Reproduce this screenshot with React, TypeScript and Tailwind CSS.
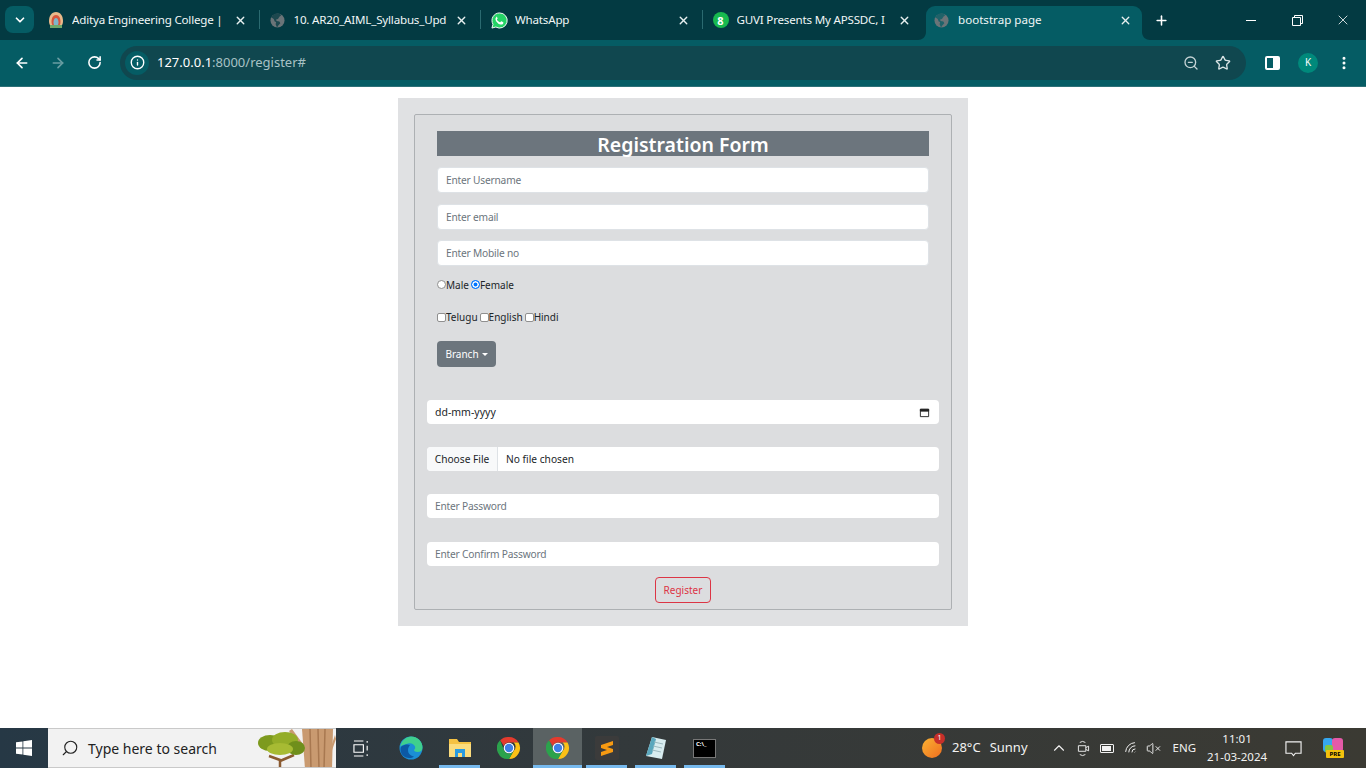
import {
  ArrowLeft,
  ArrowRight,
  ChevronDown,
  ChevronUp,
  Info,
  MoreVertical,
  Plus,
  RotateCw,
  Search,
  Star,
  VolumeX,
  Wifi,
  X,
  ZoomOut,
} from "lucide-react";
import type { ReactNode } from "react";

const ui = "font-['Noto_Sans','Open_Sans',sans-serif]";

const AdityaIcon = () => (
  <svg viewBox="0 0 16 16" className="h-[18px] w-[16px]">
    <path d="M8 0C3.500 0 1 4 1 9c0 4 2 7 7 7s7-3 7-7c0-5-2.500-9-7-9z" fill="#e9b98a" />
    <path d="M8 3C5 3 3.500 6 3.500 10c0 3 1.500 4.500 4.500 4.500s4.500-1.500 4.500-4.500C12.500 6 11 3 8 3z" fill="#d6553c" />
    <path d="M8 6c-1.500 0-2.500 2-2.500 4.500S6.500 14 8 14s2.500-1 2.500-3.500S9.500 6 8 6z" fill="#7fb6c9" />
    <path d="M2 13h12v3H2z" fill="#6fa86a" />
  </svg>
);

const GlobeIcon = ({ land }: { land: string }) => (
  <svg viewBox="0 0 16 16" className="h-[15px] w-[15px]">
    <circle cx="8" cy="8" r="7.500" fill="#6b7478" />
    <path
      d="M8 .5C5 .5 2.500 2 1.200 4.500L4 6.500l1 2.500 1.500.5L6 12l1.500 3.400L9 13l2-2-1-2-3-.5-.5-1.500 2-.5L10 4l2-1.500C11 1.300 9.500.5 8 .5z"
      fill={land}
      opacity="0.75"
    />
  </svg>
);

const WhatsAppIcon = () => (
  <svg viewBox="0 0 18 18" className="h-[17px] w-[17px]">
    <path d="M9 1a8 8 0 0 0-6.900 12L1 17l4.100-1.100A8 8 0 1 0 9 1z" fill="#25d366" stroke="#fff" strokeWidth="1" />
    <path
      d="M6.500 5c-.3 0-.7.1-1 .5-.4.500-.9 1.200-.7 2.400.2 1.300 1.200 2.800 2.500 3.900 1.400 1.100 2.700 1.600 3.700 1.500 1-.1 1.900-.8 2-1.500.1-.5.1-.8 0-.9l-2-1c-.2-.1-.4 0-.5.1l-.7.9c-.1.1-.3.1-.5 0-.6-.3-1.300-.7-1.900-1.300-.5-.5-.9-1.100-1.100-1.500-.1-.2 0-.3.1-.4l.5-.6c.1-.2.1-.3 0-.5l-.8-2c-.1-.4-.3-.6-.6-.6z"
      fill="#fff"
    />
  </svg>
);

const GuviIcon = () => (
  <div className="flex h-4 w-4 items-center justify-center rounded-full bg-[#18b94f] text-[11px] font-bold leading-none text-white">
    8
  </div>
);

const Tab = ({ icon, title, divider }: { icon: ReactNode; title: string; divider?: boolean }) => (
  <div className="relative flex h-[34px] w-[221.500px] shrink-0 items-center pb-[6px] pl-[10px] pr-[13px]">
    <div className="flex w-6 shrink-0 items-center">{icon}</div>
    <span className="min-w-0 flex-1 overflow-hidden whitespace-nowrap text-[11.600px] tracking-[-0.2px] text-[#f0f6f6]">
      {title}
    </span>
    <X size={13} strokeWidth={2.5} className="ml-2 shrink-0 text-[#e8f0f0]" />
    {divider && <div className="absolute right-0 top-[4px] h-[19px] w-px bg-[#2b6a70]" />}
  </div>
);

const ActiveTab = ({ icon, title }: { icon: ReactNode; title: string }) => (
  <div className="relative ml-[2px] flex h-[34px] w-[216px] shrink-0 items-center rounded-t-[9px] bg-[#055c64] pb-[6px] pl-[8px] pr-[10px]">
    <svg viewBox="0 0 8 8" className="absolute bottom-0 left-[-8px] h-2 w-2" fill="#055c64">
      <path d="M8 0v8H0c4 0 8-3 8-8z" />
    </svg>
    <svg viewBox="0 0 8 8" className="absolute bottom-0 right-[-8px] h-2 w-2" fill="#055c64">
      <path d="M0 0v8h8C4 8 0 5 0 0z" />
    </svg>
    <div className="flex w-6 shrink-0 items-center">{icon}</div>
    <span className="min-w-0 flex-1 overflow-hidden whitespace-nowrap text-[11.600px] text-[#f0f6f6]">{title}</span>
    <X size={13} strokeWidth={2.5} className="ml-2 shrink-0 text-[#e8f0f0]" />
  </div>
);

const ChromeStrip = () => (
  <div className="flex h-10 items-end bg-[#033a42] pl-[5px]">
    <div className="mb-[7px] mr-[4px] flex h-[27px] w-[29px] items-center justify-center rounded-lg bg-[#055c64]">
      <ChevronDown size={14} strokeWidth={3} className="text-white" />
    </div>
    <Tab icon={<AdityaIcon />} title="Aditya Engineering College |" divider />
    <Tab icon={<GlobeIcon land="#033a42" />} title="10. AR20_AIML_Syllabus_Upd" divider />
    <Tab icon={<WhatsAppIcon />} title="WhatsApp" divider />
    <Tab icon={<GuviIcon />} title="GUVI Presents My APSSDC, I" />
    <ActiveTab icon={<GlobeIcon land="#055c64" />} title="bootstrap page" />
    <div className="mb-[6px] ml-[11px] flex h-7 w-[16px] items-center justify-center">
      <Plus size={15} strokeWidth={2.5} className="text-white" />
    </div>
    <div className="ml-auto flex h-10 items-center">
      <div className="flex w-[46px] justify-center">
        <div className="h-px w-[10px] bg-white" />
      </div>
      <div className="flex w-[46px] justify-center">
        <svg viewBox="0 0 11 11" className="h-[11px] w-[11px]" fill="none" stroke="#fff">
          <path d="M.5 2.500h8v8h-8zM2.500 2.500v-2h8v8h-2" />
        </svg>
      </div>
      <div className="flex w-[46px] justify-center">
        <X size={16} strokeWidth={1.2} className="text-white" />
      </div>
    </div>
  </div>
);

const ChromeToolbar = () => (
  <div className="flex h-[47px] items-center border-b border-[#2d7077] bg-[#055c64] pb-[1px]">
    <ArrowLeft size={16} strokeWidth={2.5} className="ml-[14px] text-white" />
    <ArrowRight size={16} strokeWidth={2.5} className="ml-[20px] text-[#6a9da2]" />
    <RotateCw size={15} strokeWidth={2.5} className="ml-[21px] text-white" />
    <div className="ml-[18px] flex h-[34px] w-[1126px] items-center rounded-full bg-[#10474f]">
      <div className="ml-[5px] flex h-6 w-6 items-center justify-center rounded-full bg-[#055c64]">
        <Info size={15} strokeWidth={2.2} className="text-white" />
      </div>
      <span className="ml-[8px] text-[13px] text-white">
        127.0.0.1<span className="text-[#a8c2c5]">:8000/register#</span>
      </span>
      <ZoomOut size={16} strokeWidth={2} className="ml-auto text-[#c4d3d5]" />
      <Star size={16} strokeWidth={2} className="ml-[16px] mr-[15px] text-[#d9e4e5]" />
    </div>
    <div className="ml-[19px] flex h-[14px] w-[15px] justify-end rounded-[2px] border-2 border-white">
      <div className="w-[5px] bg-white" />
    </div>
    <div className="ml-[18px] flex h-5 w-5 items-center justify-center rounded-full bg-[#00897b] text-[10px] text-white">
      K
    </div>
    <MoreVertical size={16} strokeWidth={2.5} className="ml-[18px] text-white" />
  </div>
);

const field =
  "block h-[26px] w-full rounded-[4px] border border-[#dee2e6] bg-white px-2 text-[10.200px] tracking-[-0.2px] text-[#212529] outline-none placeholder:text-[#6c757d]";
const lowerField =
  "block h-[24px] w-full rounded-[4px] bg-white px-2 text-[10.200px] tracking-[-0.2px] text-[#212529] outline-none placeholder:text-[#6c757d]";
const radio =
  "m-0 -mt-[1px] h-[9px] w-[9px] appearance-none rounded-full border border-[#8f8f8f] bg-white checked:border-[#0075ff] checked:bg-[#0075ff] checked:shadow-[inset_0_0_0_1.500px_white]";
const check = "m-0 h-[9px] w-[9px] appearance-none rounded-[2px] border border-[#8f8f8f] bg-white";

const RegisterForm = () => (
  <div className="ml-[398px] mt-[11px] h-[528px] w-[570px] bg-[#e0e1e3] p-4">
    <div className="h-[496px] rounded-[2px] border border-[#adb0b3] bg-[#dcdddf] px-3 pt-4">
      <div className="px-[10px]">
        <h3 className="h-[25px] bg-[#6c757d] text-center text-[19.500px] font-semibold leading-[27px] text-white">
          Registration Form
        </h3>
        <input className={`${field} mt-[11px]`} placeholder="Enter Username" />
        <input className={`${field} mt-[11px]`} placeholder="Enter email" />
        <input className={`${field} mt-[10px]`} placeholder="Enter Mobile no" />
        <div className="mt-[13px] flex h-[12px] items-center text-[10px] text-[#212529]">
          <input type="radio" name="gender" className={radio} />
          <span className="mr-[2px] pt-[1px]">Male</span>
          <input type="radio" name="gender" defaultChecked className={radio} />
          <span className="pt-[1px]">Female</span>
        </div>
        <div className="mt-[20px] flex h-[12px] items-center text-[10px] text-[#212529]">
          <input type="checkbox" className={check} />
          <span className="mr-[2px] pt-[1px]">Telugu</span>
          <input type="checkbox" className={check} />
          <span className="mr-[2px] pt-[1px]">English</span>
          <input type="checkbox" className={check} />
          <span className="pt-[1px]">Hindi</span>
        </div>
        <button className="mt-[18px] flex h-[26px] w-[59px] items-center justify-center rounded-[4px] bg-[#6c757d] text-[10px] text-white">
          <span className="pt-[1px]">Branch</span>
          <span className="ml-[3px] h-0 w-0 border-x-[3.500px] border-t-[3.500px] border-x-transparent border-t-white" />
        </button>
      </div>
      <div className={`${lowerField} mt-[33px] flex items-center justify-between !tracking-normal !text-[10.500px]`}>
        <span className="pt-[2px]">dd-mm-yyyy</span>
        <svg viewBox="0 0 12 12" className="mr-[1px] h-[11px] w-[11px]" fill="none" stroke="#222">
          <path d="M1.500 2.500h9v8h-9z" />
          <path d="M1.500 2.500h9v2h-9z" fill="#222" />
        </svg>
      </div>
      <div className="mt-[23px] flex h-[24px] items-center rounded-[4px] bg-white text-[10.200px] text-[#212529]">
        <div className="flex h-full w-[71px] items-center justify-center rounded-l-[4px] border-r border-[#dee2e6] bg-[#f8f9fa] pt-[2px]">
          Choose File
        </div>
        <span className="ml-[8px] pt-[2px]">No file chosen</span>
      </div>
      <input type="password" className={`${lowerField} mt-[23px]`} placeholder="Enter Password" />
      <input type="password" className={`${lowerField} mt-[24px]`} placeholder="Enter Confirm Password" />
      <button className="mx-auto mt-[11px] block h-[26px] w-[56px] rounded-[4px] border border-[#dc3545] text-[10px] text-[#dc3545]">
        Register
      </button>
    </div>
  </div>
);

const ChromeLogo = () => (
  <svg viewBox="0 0 24 24" className="h-6 w-6">
    <path d="M12 1a11 11 0 0 1 9.530 5.500H12a5.500 5.500 0 0 0-5.100 3.400L3.100 4.300A11 11 0 0 1 12 1z" fill="#e33b2e" />
    <path d="M21.530 6.500A11 11 0 0 1 12 23l4.760-8.250a5.500 5.500 0 0 0-.1-8.250z" fill="#fbc116" />
    <path d="M12 23A11 11 0 0 1 3.100 4.300l4.140 10.450A5.500 5.500 0 0 0 12 17.500c1.760 0 3.500-.9 4.760-2.750z" fill="#2ba24c" />
    <circle cx="12" cy="12" r="5.300" fill="#fff" />
    <circle cx="12" cy="12" r="4.200" fill="#3f7fe8" />
  </svg>
);

const Task = ({
  children,
  running,
  active,
}: {
  children: ReactNode;
  running?: boolean;
  active?: boolean;
}) => (
  <div className={`relative flex h-10 w-[49px] shrink-0 items-center justify-center ${active ? "bg-[#5a6263]" : ""}`}>
    {children}
    {running && (
      <div className={`absolute bottom-0 h-[3px] bg-[#76b9ed] ${active ? "inset-x-0" : "inset-x-[4px]"}`} />
    )}
  </div>
);

const Taskbar = () => (
  <div className="flex h-10 items-center bg-gradient-to-r from-[#263845] via-[#34393a] to-[#3b3a33]">
    <div className="flex h-10 w-12 items-center justify-center">
      <svg viewBox="0 0 16 16" className="h-4 w-4" fill="#fff">
        <path d="M0 2.300 6.500 1.400v6.200H0zM7.300 1.300 16 0v7.600H7.300zM0 8.400h6.500v6.200L0 13.700zM7.300 8.400H16V16l-8.700-1.200z" />
      </svg>
    </div>
    <div className="relative flex h-10 w-[288px] items-center overflow-hidden border-y border-[#c9c9c9] bg-[#f2f2f2]">
      <Search size={18} strokeWidth={1.5} className="ml-[13px] -scale-x-100 text-[#222]" />
      <span className="ml-[9px] text-[14px] text-[#222]">Type here to search</span>
      <svg viewBox="0 0 78 40" className="absolute right-0 top-0 h-10 w-[78px]">
        <path d="M44 0h31l-1 40H47z" fill="#c99a70" />
        <path d="M52 0l1 40M60 0l1 40M67 0l-1 40" stroke="#a87850" strokeWidth="1.500" />
        <path d="M34 0l11 15v6L31 2zM77 6l1 4-5 14v-6z" fill="#c99a70" />
        <path d="M22 40V31l-11-4M22 32l14-6" stroke="#8a5a30" strokeWidth="2.500" fill="none" />
        <ellipse cx="12" cy="14" rx="12" ry="8" fill="#7d9a1e" />
        <ellipse cx="27" cy="11" rx="13" ry="8" fill="#94ad28" />
        <ellipse cx="38" cy="19" rx="9" ry="7" fill="#6f8f1b" />
        <ellipse cx="22" cy="20" rx="13" ry="6" fill="#a7bb33" />
      </svg>
    </div>
    <div className="ml-[1px] flex">
      <Task>
        <svg viewBox="0 0 18 18" className="h-[17px] w-[17px]" fill="none" stroke="#fff" strokeWidth="1.200">
          <path d="M1 1h10M1 17h10M1 5h10v8H1zM15 1v2M15 6v5M15 15v2" />
        </svg>
      </Task>
      <Task>
        <svg viewBox="0 0 24 24" className="h-6 w-6">
          <circle cx="12" cy="12" r="11.500" fill="#1b8fd6" />
          <path d="M1 12C2 4 8 .5 12 .5c6 0 11.500 4.500 11.500 11 0 3-2 4.500-5 4.500-2 0-3.500-1-3.500-2 1-1 1.500-2 1-3.500C15 8 12 6.500 9 7.500 5 9 1 9 1 12z" fill="#3fcf8e" />
          <path d="M9 14c0 4 3 6 6 6.500-3 2.500-9 2-12-2C1 15 1 11 3 10c2-1.500 6-2 8-1-1 1-2 3-2 5z" fill="#0c59a4" />
        </svg>
      </Task>
      <Task running>
        <svg viewBox="0 0 24 22" className="h-[22px] w-6">
          <path d="M1 2h8l2 3h12v15H1z" fill="#f5c243" />
          <path d="M1 7h22v13H1z" fill="#fbdc7d" />
          <path d="M7 12h10v8h-3v-4h-4v4H7z" fill="#2a9be0" />
        </svg>
      </Task>
      <Task>
        <ChromeLogo />
      </Task>
      <Task running active>
        <ChromeLogo />
      </Task>
      <Task running>
        <div className="flex h-6 w-6 items-center justify-center rounded-[2px] bg-[#3b3b3b]">
          <svg viewBox="0 0 14 17" className="h-[17px] w-[14px]" fill="#f79a12">
            <path d="M1 5 13 1v4L7 7l6 2v3L1 16v-4l6-2-6-2z" />
          </svg>
        </div>
      </Task>
      <Task running>
        <svg viewBox="0 0 24 24" className="h-6 w-6">
          <path d="M8 1l14 3-4 19-16-3z" fill="#d8ecef" />
          <path d="M8 1 2 20l6-2 4-15z" fill="#5aa7bd" />
          <path d="M10 6l9 2M9 10l9 2M8 14l9 2" stroke="#9cb9bf" strokeWidth="1" />
        </svg>
      </Task>
      <Task running>
        <div className="h-[19px] w-[23px] border border-[#777] bg-black pl-[2px] text-[6px] font-bold leading-[8px] text-white">
          C:\_
        </div>
      </Task>
    </div>
    <div className="ml-[3px] flex h-10 flex-1 items-center text-[#f2f2f2]">
      <div className="relative ml-[190px] h-5 w-5 rounded-full bg-gradient-to-br from-[#f9b233] to-[#ee6c1f]">
        <div className="absolute right-[-3px] top-[-5px] flex h-[11px] w-[11px] items-center justify-center rounded-full bg-[#c62f2a] text-[7px] text-white">
          1
        </div>
      </div>
      <span className="ml-[10px] text-[13px]">28°C</span>
      <span className="ml-[9px] text-[13px]">Sunny</span>
      <ChevronUp size={18} strokeWidth={1.5} className="ml-[22px]" />
      <svg viewBox="0 0 14 18" className="ml-[9px] h-[17px] w-[13px]" fill="none" stroke="#f2f2f2" strokeWidth="1">
        <path d="M1.500 6h8v6h-8zM9.500 8l3-1.500v5l-3-1.500M3 2.500a5 5 0 0 1 6 0M3 15.500a5 5 0 0 0 6 0" />
      </svg>
      <div className="ml-[10px] flex h-[9px] w-[14px] items-center rounded-[1px] border border-[#f2f2f2] p-px">
        <div className="h-full w-[9px] bg-[#f2f2f2]" />
      </div>
      <Wifi size={15} strokeWidth={1.5} className="ml-[10px] -rotate-45" />
      <VolumeX size={15} strokeWidth={1.5} className="ml-[7px]" />
      <span className="ml-[12px] text-[11.500px]">ENG</span>
      <div className="ml-[10px] flex w-[62px] flex-col items-center text-[11.500px] leading-[18px]">
        <span>11:01</span>
        <span>21-03-2024</span>
      </div>
      <svg viewBox="0 0 18 18" className="ml-[17px] h-[17px] w-[17px]" fill="none" stroke="#f2f2f2" strokeWidth="1.200">
        <path d="M1 2h16v12h-6l-2 2.500L7 14H1z" />
      </svg>
      <div className="relative ml-[21px] h-5 w-5">
        <div className="absolute left-0 top-0 h-[14px] w-[10px] rounded-[3px] bg-[#35a7f0]" />
        <div className="absolute right-0 top-0 h-[14px] w-[11px] rounded-[3px] bg-[#e45aa8]" />
        <div className="absolute bottom-[5px] left-[2px] h-[8px] w-[8px] rounded-[2px] bg-[#85c640]" />
        <div className="absolute bottom-0 right-[-1px] flex h-[8px] w-[18px] items-center justify-center rounded-[1px] bg-[#f4c20d] text-[6px] font-bold leading-none text-black">
          PRE
        </div>
      </div>
    </div>
  </div>
);

export default function App() {
  return (
    <div className={`flex h-screen flex-col overflow-hidden bg-white ${ui}`}>
      <ChromeStrip />
      <ChromeToolbar />
      <main className="min-h-0 flex-1">
        <RegisterForm />
      </main>
      <Taskbar />
    </div>
  );
}
